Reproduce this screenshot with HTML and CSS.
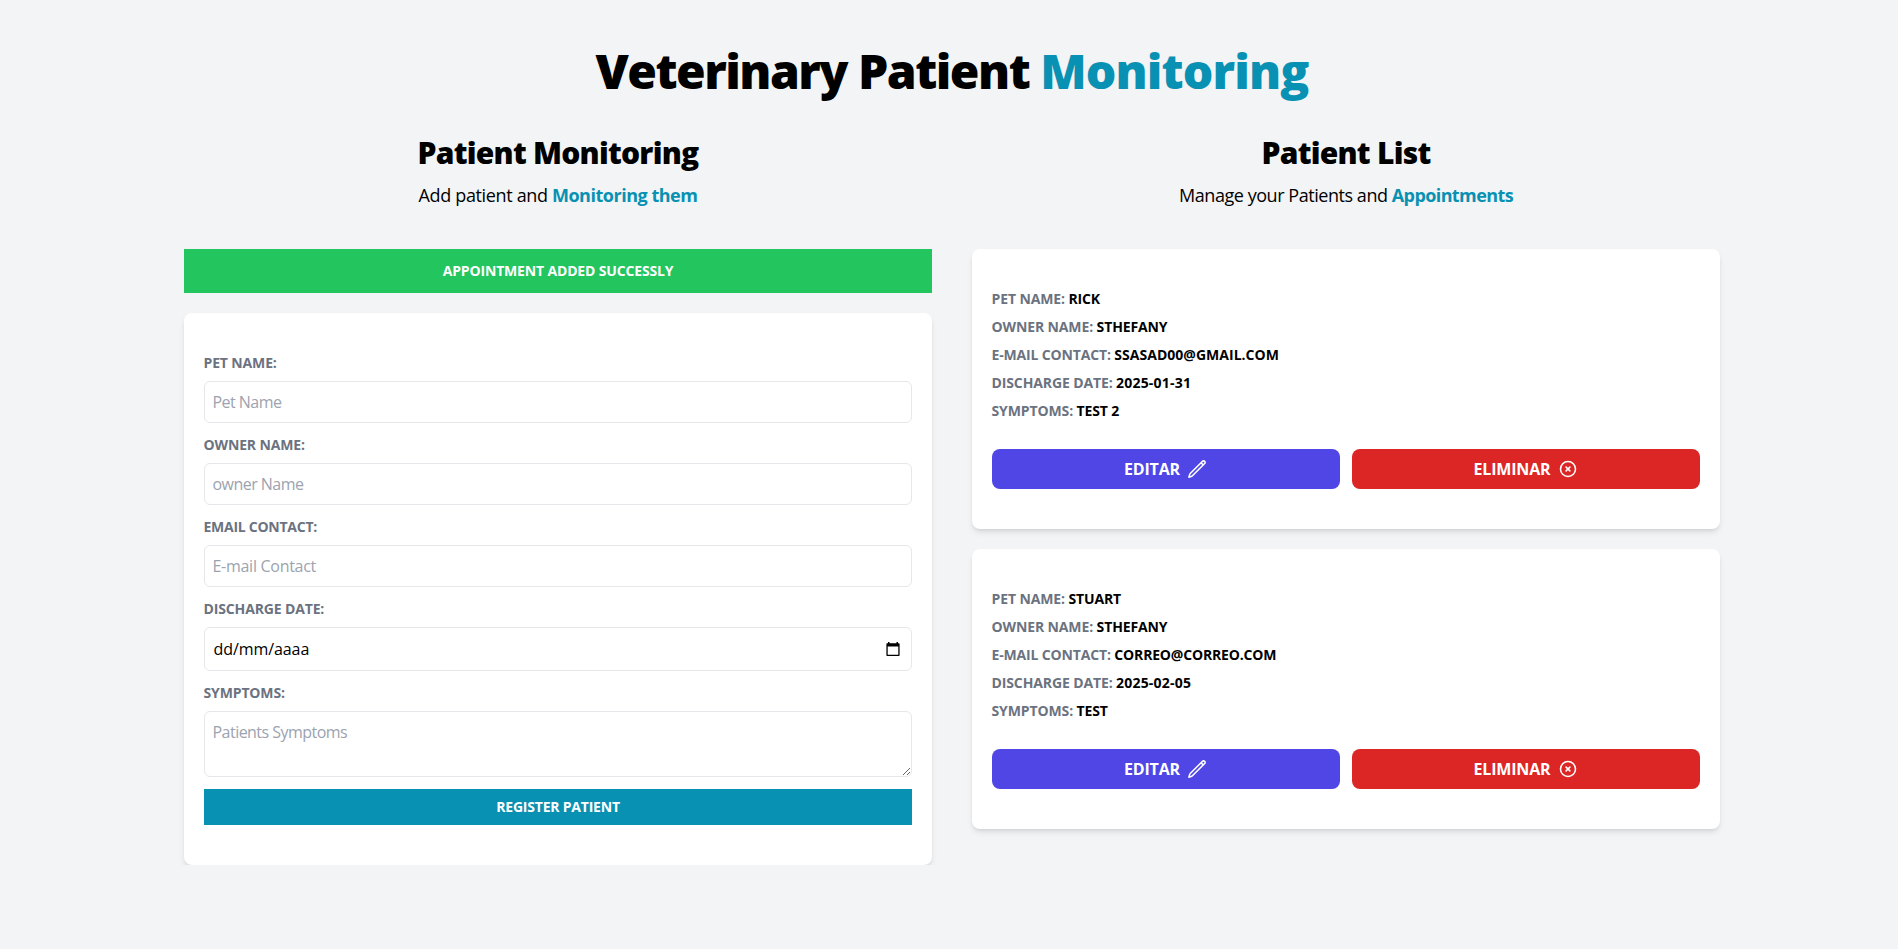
FILE: index.html
```html
<!DOCTYPE html>
<html lang="en">
<head>
<meta charset="utf-8">
<title>Veterinary Patient Monitoring</title>
<link rel="stylesheet" href="styles.css">
</head>
<body>
<div class="container">
  <h1 class="title">Veterinary Patient <span class="accent">Monitoring</span></h1>
  <main class="columns">
    <section>
      <h2 class="heading">Patient Monitoring</h2>
      <p class="lead">Add patient and <strong class="accent">Monitoring them</strong></p>
      <div class="alert">Appointment added successly</div>
      <form class="card form">
        <label class="label" for="pet">Pet Name:</label>
        <input class="field" id="pet" type="text" placeholder="Pet Name">
        <label class="label" for="owner">Owner Name:</label>
        <input class="field" id="owner" type="text" placeholder="owner Name">
        <label class="label label-email" for="email">Email Contact:</label>
        <input class="field field-email" id="email" type="email" placeholder="E-mail Contact">
        <label class="label">Discharge Date:</label>
        <div class="field date">
          <span>dd/mm/aaaa</span>
          <svg class="calendar" viewBox="0 0 14 15"><path fill="#000" d="M2 0h1.500v1.300h7V0H12v1.300h.6c.6 0 1 .4 1 1V13c0 .6-.4 1-1 1H1.400c-.6 0-1-.4-1-1V2.300c0-.6.4-1 1-1H2zM1.700 4.600v8.100h10.600V4.600z"/></svg>
        </div>
        <label class="label" for="symptoms">Symptoms:</label>
        <textarea class="field area" id="symptoms" rows="2" placeholder="Patients Symptoms"></textarea>
        <button class="submit" type="button">Register Patient</button>
      </form>
    </section>
    <section>
      <h2 class="heading">Patient List</h2>
      <p class="lead lead-list">Manage your Patients and <strong class="accent">Appointments</strong></p>
      <article class="card patient">
        <p class="row">Pet Name: <span class="value">Rick</span></p>
        <p class="row">Owner Name: <span class="value">Sthefany</span></p>
        <p class="row row-email">E-mail Contact: <span class="value mail">ssasad00@gmail.com</span></p>
        <p class="row">Discharge Date: <span class="value number">2025-01-31</span></p>
        <p class="row">Symptoms: <span class="value">Test 2</span></p>
        <div class="actions">
          <button class="btn edit" type="button">Editar
            <svg class="icon" viewBox="0 0 24 24"><path d="m16.862 4.487 1.687-1.688a1.875 1.875 0 1 1 2.652 2.652L6.832 19.820a4.500 4.500 0 0 1-1.897 1.130l-2.685.8.8-2.685a4.500 4.500 0 0 1 1.130-1.897L16.863 4.487Zm0 0L19.500 7.125"/></svg>
          </button>
          <button class="btn delete" type="button">Eliminar
            <svg class="icon" viewBox="0 0 24 24"><path d="m9.750 9.750 4.500 4.500m0-4.500-4.500 4.500M21 12a9 9 0 1 1-18 0 9 9 0 0 1 18 0Z"/></svg>
          </button>
        </div>
      </article>
      <article class="card patient">
        <p class="row">Pet Name: <span class="value">Stuart</span></p>
        <p class="row">Owner Name: <span class="value">Sthefany</span></p>
        <p class="row row-email">E-mail Contact: <span class="value mail-tight">correo@correo.com</span></p>
        <p class="row">Discharge Date: <span class="value number">2025-02-05</span></p>
        <p class="row">Symptoms: <span class="value">Test</span></p>
        <div class="actions">
          <button class="btn edit" type="button">Editar
            <svg class="icon" viewBox="0 0 24 24"><path d="m16.862 4.487 1.687-1.688a1.875 1.875 0 1 1 2.652 2.652L6.832 19.820a4.500 4.500 0 0 1-1.897 1.130l-2.685.8.8-2.685a4.500 4.500 0 0 1 1.130-1.897L16.863 4.487Zm0 0L19.500 7.125"/></svg>
          </button>
          <button class="btn delete" type="button">Eliminar
            <svg class="icon" viewBox="0 0 24 24"><path d="m9.750 9.750 4.500 4.500m0-4.500-4.500 4.500M21 12a9 9 0 1 1-18 0 9 9 0 0 1 18 0Z"/></svg>
          </button>
        </div>
      </article>
    </section>
  </main>
</div>
</body>
</html>
```
FILE: styles.css
```css
* { box-sizing: border-box; margin: 0; padding: 0; }

body {
  background: #f3f4f6;
  color: #000;
  font: 16px/24px "Open Sans", "Noto Sans", sans-serif;
}

.container { width: 1536px; margin-left: 184px; padding-top: 47px; }
.accent { color: #0891b2; }

.title {
  font-size: 48px;
  line-height: 48px;
  font-weight: 900;
  letter-spacing: -1.52px;
  text-align: center;
}
.title .accent { letter-spacing: -.85px; }

.columns {
  display: grid;
  grid-template-columns: 1fr 1fr;
  gap: 40px;
  margin-top: 40px;
}

.heading {
  font-size: 30px;
  line-height: 36px;
  font-weight: 900;
  letter-spacing: -.75px;
  text-align: center;
}

.lead {
  margin: 10px 0 40px;
  font-size: 18px;
  line-height: 28px;
  letter-spacing: -.35px;
  text-align: center;
}
.lead .accent { font-weight: 700; letter-spacing: -.48px; }
.lead-list { letter-spacing: -.45px; }
.lead-list .accent { letter-spacing: -.6px; }

.alert {
  margin-bottom: 20px;
  padding: 12px;
  background: #22c55e;
  color: #fff;
  font-size: 14px;
  line-height: 20px;
  font-weight: 700;
  letter-spacing: -.16px;
  text-align: center;
  text-transform: uppercase;
}

.card {
  padding: 40px 20px;
  background: #fff;
  border-radius: 8px;
  box-shadow: 0 4px 6px -1px rgb(0 0 0 / .1), 0 2px 4px -2px rgb(0 0 0 / .1);
}

.form { display: flex; flex-direction: column; }

.label {
  margin-bottom: 8px;
  color: #6b7280;
  font-size: 14px;
  line-height: 20px;
  font-weight: 700;
  letter-spacing: -.14px;
  text-indent: -.5px;
  text-transform: uppercase;
}
.label-email { letter-spacing: -.26px; }

.field {
  display: block;
  width: 100%;
  height: 42px;
  margin-bottom: 12px;
  padding: 8px 8px 8px 7.5px;
  border: 1px solid #e5e7eb;
  border-radius: 6px;
  background: #fff;
  color: #000;
  font: inherit;
  letter-spacing: -.53px;
}
.field::placeholder { color: #9ca3af; opacity: 1; }
.field-email { letter-spacing: -.28px; }

.date {
  display: flex;
  align-items: center;
  justify-content: space-between;
  height: 44px;
  padding: 8px 11px 8px 8.5px;
  letter-spacing: -.08px;
}
.calendar { width: 14px; height: 15px; }
.area { height: 66px; resize: vertical; }

.submit {
  height: 36px;
  border: 0;
  background: #0891b2;
  color: #fff;
  font: 700 14px/20px "Open Sans", "Noto Sans", sans-serif;
  letter-spacing: -.21px;
  text-transform: uppercase;
}

.patient + .patient { margin-top: 20px; }

.row {
  margin-bottom: 8px;
  color: #6b7280;
  font-size: 14px;
  line-height: 20px;
  font-weight: 700;
  letter-spacing: -.12px;
  text-indent: -.5px;
  text-transform: uppercase;
}
.row-email { letter-spacing: -.15px; }
.value { color: #000; }
.mail { letter-spacing: .02px; }
.mail-tight { letter-spacing: -.18px; }
.number { letter-spacing: .2px; }

.actions {
  display: grid;
  grid-template-columns: 1fr 1fr;
  gap: 12px;
  margin-top: 28px;
}

.btn {
  display: flex;
  align-items: center;
  justify-content: center;
  gap: 7px;
  height: 40px;
  padding-right: 1px;
  border: 0;
  border-radius: 8px;
  color: #fff;
  font: 700 16px/24px "Open Sans", "Noto Sans", sans-serif;
  letter-spacing: -.16px;
  text-transform: uppercase;
}
.edit { background: #4f46e5; }
.delete { background: #dc2626; }

.icon {
  width: 20px;
  height: 20px;
  fill: none;
  stroke: currentColor;
  stroke-width: 1.9;
  stroke-linecap: round;
  stroke-linejoin: round;
}
```
